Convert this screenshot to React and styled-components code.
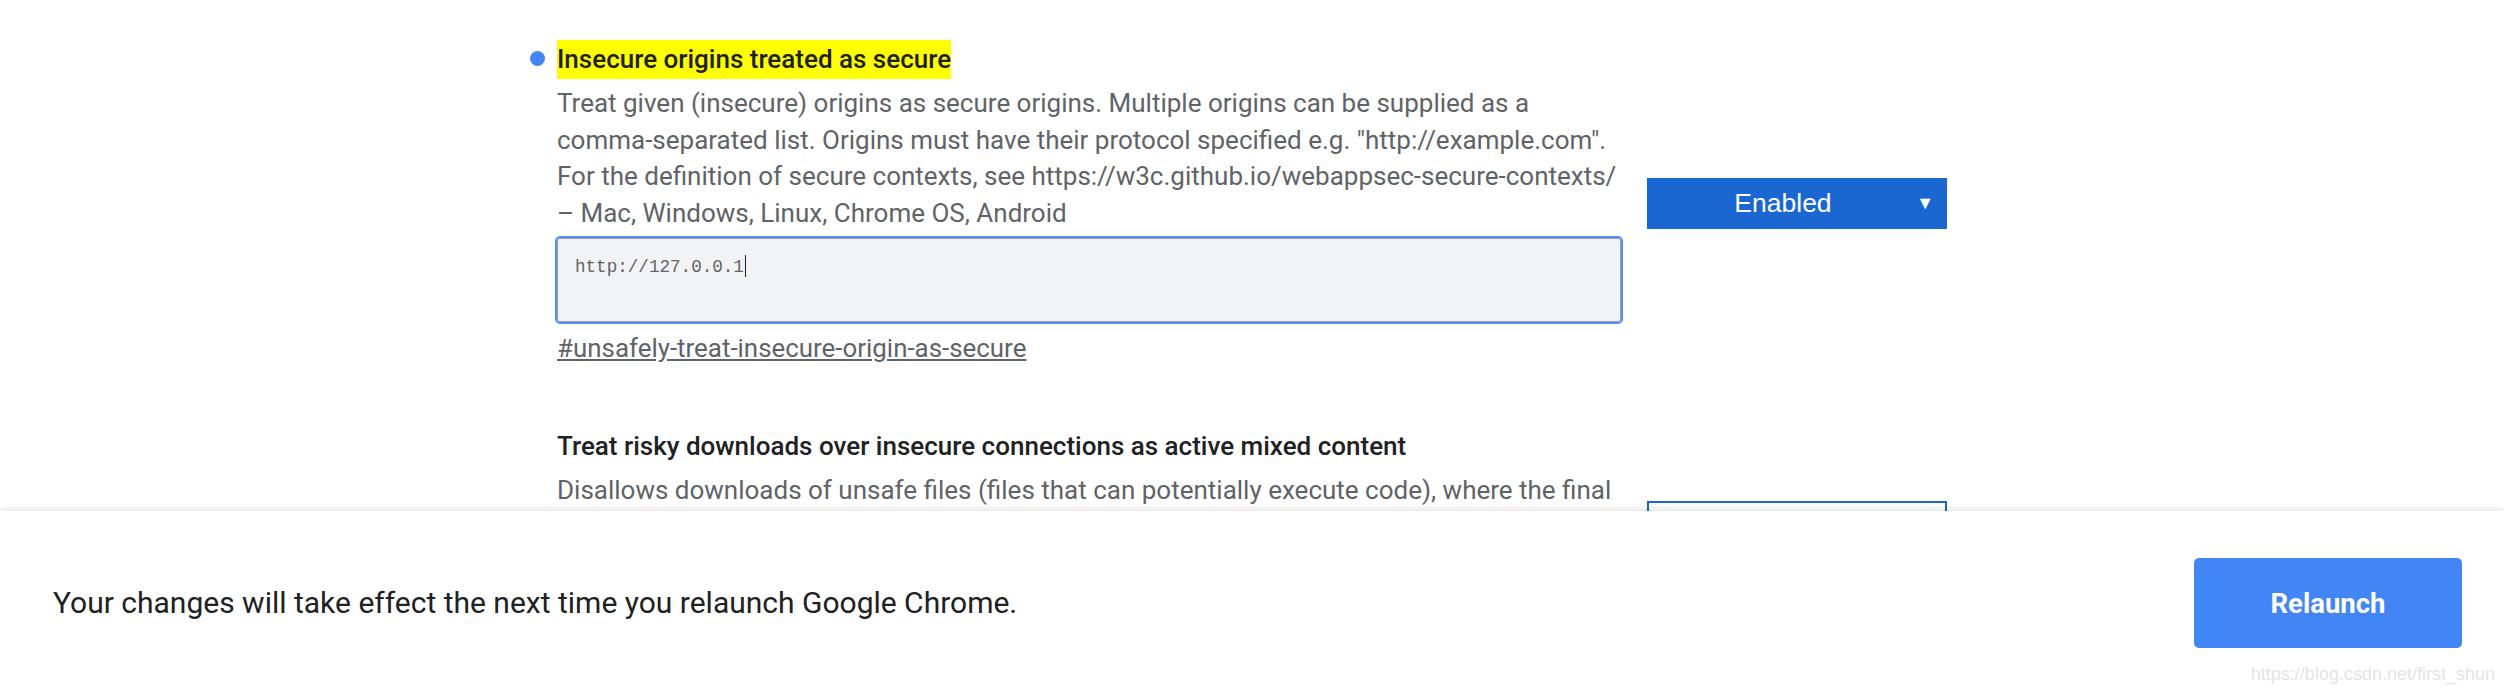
import React from "react"
import styled, { createGlobalStyle } from "styled-components"

const GlobalStyle = createGlobalStyle`
  html, body {
    margin: 0;
    padding: 0;
    background: #fff;
  }
  body {
    font-family: Roboto, "Noto Sans", sans-serif;
  }
`

const Page = styled.div`
  position: relative;
  display: flex;
  flex-direction: column;
  width: 2504px;
  height: 693px;
  overflow: hidden;
`

const Content = styled.div`
  flex: 1;
  overflow: hidden;
  padding: 40px 0 0 530px;
`

const Experiment = styled.div`
  display: flex;
  align-items: center;
  margin-bottom: ${(p) => p.$gap || 0}px;
`

const DotCol = styled.div`
  width: 27px;
  align-self: flex-start;
  padding-top: 11px;
`

const Dot = styled.span`
  display: block;
  width: 15px;
  height: 15px;
  border-radius: 50%;
  background: ${(p) => (p.$on ? "#4285f4" : "transparent")};
`

const Body = styled.div`
  width: 1064px;
`

const Title = styled.h2`
  margin: 0;
  font-size: 26px;
  font-weight: 500;
  color: #202124;
  line-height: 39px;
  span {
    display: inline-block;
    background: ${(p) => (p.$marked ? "#ffff00" : "transparent")};
  }
`

const Desc = styled.p`
  width: 1072px;
  margin: 6px 0 0;
  font-size: 26px;
  line-height: 36.7px;
  color: #5f6368;
`

const TextBox = styled.div`
  box-sizing: border-box;
  margin-top: 6px;
  height: 84px;
  padding: 16px 17px;
  background: #f1f3f4;
  border: 1px solid #9e9e9e;
  border-radius: 3px;
  outline: 2px solid #4d90fe;
  font-family: "Liberation Mono", monospace;
  font-size: 17.6px;
  line-height: 24px;
  color: #5f6368;
`

const Caret = styled.span`
  display: inline-block;
  width: 1px;
  height: 22px;
  margin-left: 1px;
  vertical-align: -5px;
  background: #202124;
`

const Permalink = styled.a`
  display: inline-block;
  margin-top: 8px;
  font-size: 25.9px;
  line-height: 37px;
  color: #5f6368;
  text-decoration: underline;
`

const Select = styled.div`
  box-sizing: border-box;
  position: relative;
  margin-left: 26px;
  width: 300px;
  flex-shrink: 0;
  height: 51px;
  padding-right: 28px;
  display: flex;
  align-items: center;
  justify-content: center;
  font-family: "Liberation Sans", Arial, sans-serif;
  font-size: 26.5px;
  color: #fff;
  background: ${(p) => (p.$enabled ? "#1a67d2" : "#fff")};
  border: 2px solid #1a67d2;
  &::after {
    content: "▼";
    position: absolute;
    right: 11px;
    top: 13px;
    font-size: 18px;
    color: ${(p) => (p.$enabled ? "#fff" : "#1a67d2")};
  }
`

const Footer = styled.div`
  flex: 0 0 182px;
  display: flex;
  align-items: center;
  justify-content: space-between;
  padding: 0 42px 0 53px;
  background: #fff;
  box-shadow: 0 -2px 6px rgba(0, 0, 0, 0.12);
  z-index: 1;
`

const Notice = styled.div`
  font-size: 30px;
  color: #202124;
`

const RelaunchButton = styled.button`
  width: 268px;
  height: 90px;
  margin-top: 2px;
  border: none;
  border-radius: 5px;
  background: #4285f4;
  color: #fff;
  font-family: Roboto, sans-serif;
  font-size: 27.5px;
  font-weight: 700;
  cursor: pointer;
`

const Watermark = styled.div`
  position: absolute;
  right: 9px;
  bottom: 8px;
  z-index: 2;
  font-family: "Liberation Sans", Arial, sans-serif;
  font-size: 18px;
  color: #e4e4e4;
`

const flags = [
  {
    id: "unsafely-treat-insecure-origin-as-secure",
    name: "Insecure origins treated as secure",
    desc:
      'Treat given (insecure) origins as secure origins. Multiple origins can be supplied as a comma\u2011separated list. Origins must have their protocol specified e.g. "http://example.com". For the definition of secure contexts, see https://w3c.github.io/webappsec-secure-contexts/ – Mac, Windows, Linux, Chrome OS, Android',
    value: "http://127.0.0.1",
    enabled: true,
  },
  {
    id: "treat-unsafe-downloads-as-active-content",
    name: "Treat risky downloads over insecure connections as active mixed content",
    desc:
      "Disallows downloads of unsafe files (files that can potentially execute code), where the final download is initiated from a non-secure context, or where the download is itself delivered over an insecure connection. – Mac, Windows, Linux, Chrome OS, Android",
    enabled: false,
  },
]

const App = () => (
  <>
    <GlobalStyle />
    <Page>
      <Content>
        {flags.map((f, i) => (
          <Experiment key={f.id} $gap={i === 0 ? 60 : 0}>
            <DotCol>
              <Dot $on={f.enabled} />
            </DotCol>
            <Body>
              <Title $marked={f.enabled}>
                <span>{f.name}</span>
              </Title>
              <Desc>{f.desc}</Desc>
              {f.value && (
                <TextBox>
                  {f.value}
                  <Caret />
                </TextBox>
              )}
              <Permalink href={`#${f.id}`}>#{f.id}</Permalink>
            </Body>
            <Select $enabled={f.enabled}>{f.enabled ? "Enabled" : "Default"}</Select>
          </Experiment>
        ))}
      </Content>
      <Footer>
        <Notice>Your changes will take effect the next time you relaunch Google Chrome.</Notice>
        <RelaunchButton>Relaunch</RelaunchButton>
      </Footer>
      <Watermark>https://blog.csdn.net/first_shun</Watermark>
    </Page>
  </>
)

export default App
